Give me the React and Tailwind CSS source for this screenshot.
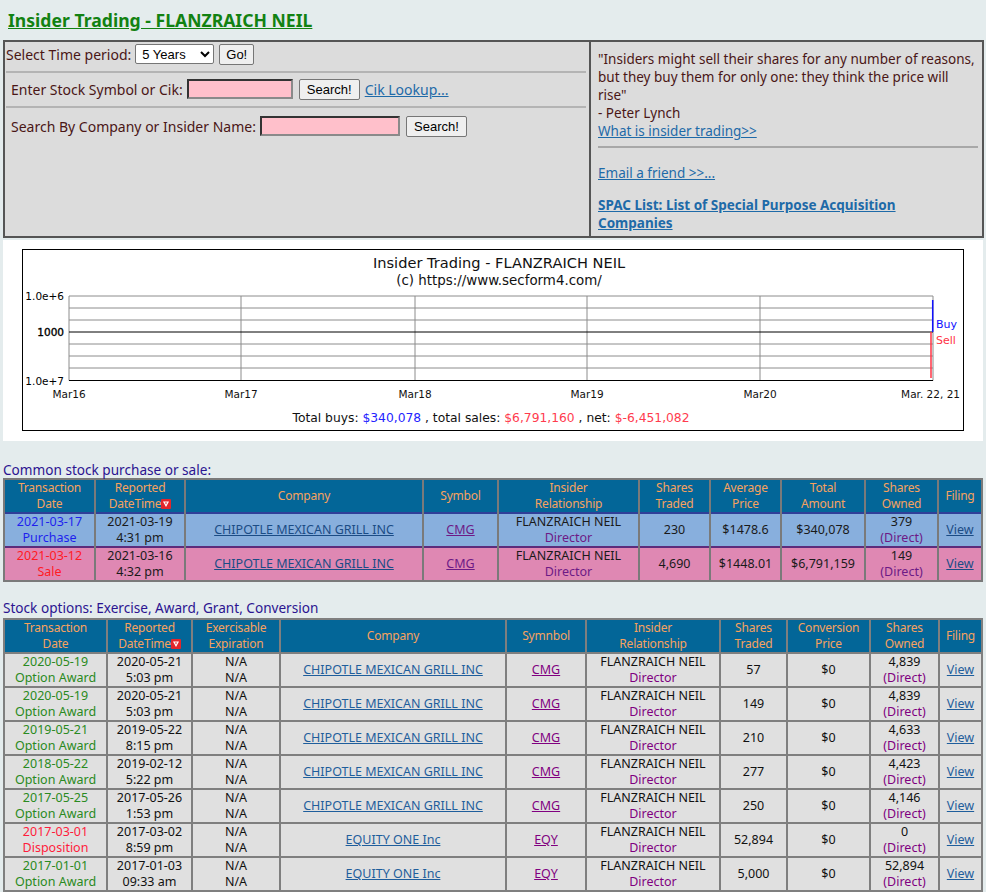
import { useState } from "react";

const trades = [
  {
    date: "2021-03-17",
    kind: "Purchase",
    reported: "2021-03-19",
    time: "4:31 pm",
    company: "CHIPOTLE MEXICAN GRILL INC",
    symbol: "CMG",
    shares: "230",
    price: "$1478.6",
    total: "$340,078",
    owned: "379",
    buy: true,
  },
  {
    date: "2021-03-12",
    kind: "Sale",
    reported: "2021-03-16",
    time: "4:32 pm",
    company: "CHIPOTLE MEXICAN GRILL INC",
    symbol: "CMG",
    shares: "4,690",
    price: "$1448.01",
    total: "$6,791,159",
    owned: "149",
    buy: false,
  },
];

const options = [
  ["2020-05-19", "Option Award", "2020-05-21", "5:03 pm", "CHIPOTLE MEXICAN GRILL INC", "CMG", "57", "4,839"],
  ["2020-05-19", "Option Award", "2020-05-21", "5:03 pm", "CHIPOTLE MEXICAN GRILL INC", "CMG", "149", "4,839"],
  ["2019-05-21", "Option Award", "2019-05-22", "8:15 pm", "CHIPOTLE MEXICAN GRILL INC", "CMG", "210", "4,633"],
  ["2018-05-22", "Option Award", "2019-02-12", "5:22 pm", "CHIPOTLE MEXICAN GRILL INC", "CMG", "277", "4,423"],
  ["2017-05-25", "Option Award", "2017-05-26", "1:53 pm", "CHIPOTLE MEXICAN GRILL INC", "CMG", "250", "4,146"],
  ["2017-03-01", "Disposition", "2017-03-02", "8:59 pm", "EQUITY ONE Inc", "EQY", "52,894", "0"],
  ["2017-01-01", "Option Award", "2017-01-03", "09:33 am", "EQUITY ONE Inc", "EQY", "5,000", "52,894"],
  ["2016-01-01", "Option Award", "2016-01-05", "10:12 am", "EQUITY ONE Inc", "EQY", "5,000", "47,894"],
];

function SortIcon() {
  return (
    <svg width="10" height="10" viewBox="0 0 10 10" className="inline-block align-[-1px]">
      <rect x="0" y="0" width="10" height="10" rx="1" fill="#e3262b" />
      <path d="M2 2.5 L8 2.5 L5 8 Z" fill="#fff" />
      <path d="M3.9 3.6 L6.1 3.6 L5 5.6 Z" fill="#e3262b" />
    </svg>
  );
}

function Chart() {
  const hLines = [46, 58, 70, 94, 106, 118];
  const vLines = [46, 218, 392, 564, 737, 910];
  const xLabels = [
    ["Mar16", 46],
    ["Mar17", 218],
    ["Mar18", 392],
    ["Mar19", 564],
    ["Mar20", 737],
  ];
  return (
    <svg width="940" height="180" viewBox="0 0 940 180" className="block font-['DejaVu_Sans',sans-serif]">
      <text x="476" y="18" fontSize="14.6" textAnchor="middle" fill="#111">
        Insider Trading - FLANZRAICH NEIL
      </text>
      <text x="476" y="35" fontSize="13.4" textAnchor="middle" fill="#111">
        (c) https://www.secform4.com/
      </text>
      {hLines.map((y) => (
        <line key={y} x1="46" x2="910" y1={y} y2={y} stroke="#8c8c8c" strokeWidth="1" />
      ))}
      {vLines.map((x) => (
        <line key={x} x1={x} x2={x} y1="46" y2="130.5" stroke="#8c8c8c" strokeWidth="1" />
      ))}
      <line x1="46" x2="910" y1="82" y2="82" stroke="#000" strokeWidth="1" />
      <line x1="46" x2="910" y1="130.5" y2="130.5" stroke="#000" strokeWidth="1" />
      <text x="41" y="49.5" fontSize="10.5" textAnchor="end" fill="#000">1.0e+6</text>
      <text x="41" y="86" fontSize="10.5" textAnchor="end" fill="#000" stroke="#000" strokeWidth="0.35">1000</text>
      <text x="41" y="134.5" fontSize="10.5" textAnchor="end" fill="#000">1.0e+7</text>
      {xLabels.map(([t, x]) => (
        <text key={t} x={x} y="148" fontSize="10.5" textAnchor="middle" fill="#111">
          {t}
        </text>
      ))}
      <text x="937" y="148" fontSize="10.5" textAnchor="end" fill="#111">Mar. 22, 21</text>
      <line x1="909.7" x2="909.7" y1="50" y2="82" stroke="#1010ff" strokeWidth="1.5" />
      <line x1="908" x2="908" y1="82" y2="128" stroke="#ff3344" strokeWidth="1.5" />
      <text x="913" y="78" fontSize="11" fill="#1010ff">Buy</text>
      <text x="913" y="94" fontSize="11" fill="#ff3344">Sell</text>
      <text x="468" y="172" fontSize="12.3" textAnchor="middle" fill="#111">
        Total buys: <tspan fill="#2222ff">$340,078</tspan> , total sales:{" "}
        <tspan fill="#ff3b4e">$6,791,160</tspan> , net: <tspan fill="#ff3b4e">$-6,451,082</tspan>
      </text>
    </svg>
  );
}

const th =
  "h-[32px] bg-[#036698] text-[#f7a25e] text-[12px] tracking-[-0.2px] font-normal text-center align-middle leading-[16px] p-0";

export default function App() {
  const [period, setPeriod] = useState("5");

  return (
    <div className="min-h-screen bg-[#e4eced] pb-6 font-['Noto_Sans',sans-serif] text-[12.5px]">
      {/* TITLE */}
      <div className="flex h-[40px] items-center pl-[8px]">
        <a href="#" className="text-[17.6px] font-bold text-[#128212] underline">
          Insider Trading - FLANZRAICH NEIL
        </a>
      </div>

      {/* SEARCH BOX */}
      <div className="ml-[3px] flex h-[198px] w-[981px] border-2 border-[#555] bg-[#dcdcdc] text-[#4a1616]">
        <div className="w-[586px] shrink-0 border-r-2 border-[#555] pt-px text-[14px]">
          <div className="flex h-[22px] items-center pl-px">
            <span>Select Time period:</span>
            <select
              value={period}
              onChange={(e) => setPeriod(e.target.value)}
              className="ml-[4px] h-[20px] w-[79px] rounded-[2px] border border-[#767676] bg-white px-[2px] font-['Liberation_Sans',sans-serif] text-[13px] text-black"
            >
              <option value="1">1 Year</option>
              <option value="5">5 Years</option>
              <option value="10">10 Years</option>
            </select>
            <button className="ml-[5px] h-[21px] w-[35px] rounded-[2px] border border-[#767676] bg-[#efefef] font-['Liberation_Sans',sans-serif] text-[13px] text-black">
              Go!
            </button>
          </div>
          <div className="ml-px mr-[3px] mt-[6px] h-[2px] bg-[#b4b4b4]" />
          <div className="mt-[5px] flex h-[22px] items-center pl-[6px]">
            <span>Enter Stock Symbol or Cik:</span>
            <input className="ml-[4px] h-[20px] w-[106px] border-2 border-b-[#8a8a8a] border-l-[#333] border-r-[#8a8a8a] border-t-[#333] bg-[#ffc0cb]" />
            <button className="ml-[6px] h-[21px] w-[61px] rounded-[2px] border border-[#767676] bg-[#efefef] font-['Liberation_Sans',sans-serif] text-[13px] text-black">
              Search!
            </button>
            <a href="#" className="ml-[5px] text-[#1e6aa8] underline">
              Cik Lookup...
            </a>
          </div>
          <div className="ml-px mr-[3px] mt-[6px] h-[2px] bg-[#b4b4b4]" />
          <div className="mt-[7px] flex h-[22px] items-center pl-[6px]">
            <span>Search By Company or Insider Name:</span>
            <input className="ml-[4px] h-[20px] w-[140px] border-2 border-b-[#8a8a8a] border-l-[#333] border-r-[#8a8a8a] border-t-[#333] bg-[#ffc0cb]" />
            <button className="ml-[6px] h-[21px] w-[61px] rounded-[2px] border border-[#767676] bg-[#efefef] font-['Liberation_Sans',sans-serif] text-[13px] text-black">
              Search!
            </button>
          </div>
        </div>

        <div className="flex-1 pl-[7px] pr-[4px] pt-[8px] text-[13.5px] leading-[18px]">
          <p className="whitespace-nowrap">"Insiders might sell their shares for any number of reasons,</p>
          <p className="whitespace-nowrap">but they buy them for only one: they think the price will</p>
          <p>rise"</p>
          <p>- Peter Lynch</p>
          <a href="#" className="text-[#1e6aa8] underline">
            What is insider trading&gt;&gt;
          </a>
          <div className="mt-[6px] h-[2px] bg-[#a8a8a8]" />
          <a href="#" className="mt-[16px] block text-[#1e6aa8] underline">
            Email a friend &gt;&gt;...
          </a>
          <a href="#" className="mt-[14px] block font-bold text-[#1e6aa8] underline">
            SPAC List: List of Special Purpose Acquisition
            <br />
            Companies
          </a>
        </div>
      </div>

      {/* CHART */}
      <div className="ml-[3px] mt-[2px] h-[201px] w-[980px] bg-white pl-[19px] pt-[9px]">
        <div className="w-[942px] border border-black">
          <Chart />
        </div>
      </div>

      {/* COMMON STOCK */}
      <p className="pl-[3px] pt-[21px] text-[13.6px] leading-[16px] text-[#2b1491]">Common stock purchase or sale:</p>
      <table className="ml-[3px] w-[980px] table-fixed border-separate border-spacing-[2px] bg-[#7a7a7a] leading-[16px]">
        <colgroup>
          <col className="w-[89px]" />
          <col className="w-[88px]" />
          <col className="w-[236px]" />
          <col className="w-[73px]" />
          <col className="w-[139px]" />
          <col className="w-[69px]" />
          <col className="w-[69px]" />
          <col className="w-[82px]" />
          <col className="w-[71px]" />
          <col />
        </colgroup>
        <thead>
          <tr>
            <th className={th}>Transaction<br />Date</th>
            <th className={th}>Reported<br />DateTime<SortIcon /></th>
            <th className={th}>Company</th>
            <th className={th}>Symbol</th>
            <th className={th}>Insider<br />Relationship</th>
            <th className={th}>Shares<br />Traded</th>
            <th className={th}>Average<br />Price</th>
            <th className={th}>Total<br />Amount</th>
            <th className={th}>Shares<br />Owned</th>
            <th className={th}>Filing</th>
          </tr>
        </thead>
        <tbody>
          {trades.map((t) => {
            const cell = t.buy
              ? "h-[32px] bg-[#88afdd] p-0 text-center align-middle text-[#1a1a1a] shadow-[0_-2px_0_#2f3f98]"
              : "h-[32px] bg-[#df88b3] p-0 text-center align-middle text-[#1a1a1a] shadow-[0_-2px_0_#5d2c7c]";
            return (
              <tr key={t.date}>
                <td className={cell}>
                  <span className={t.buy ? "text-[#1f1fee]" : "text-[#ff1a24]"}>
                    {t.date}
                    <br />
                    {t.kind}
                  </span>
                </td>
                <td className={cell}>
                  {t.reported}
                  <br />
                  {t.time}
                </td>
                <td className={cell}>
                  <a href="#" className="text-[#1b4c85] underline">{t.company}</a>
                </td>
                <td className={cell}>
                  <a href="#" className="text-[#6d1a86] underline">{t.symbol}</a>
                </td>
                <td className={cell}>
                  FLANZRAICH NEIL
                  <br />
                  <span className="text-[#6d1a86]">Director</span>
                </td>
                <td className={cell}>{t.shares}</td>
                <td className={cell}>{t.price}</td>
                <td className={cell}>{t.total}</td>
                <td className={cell}>
                  {t.owned}
                  <br />
                  <span className="text-[#6d1a86]">(Direct)</span>
                </td>
                <td className={cell}>
                  <a href="#" className="text-[#1b4c85] underline">View</a>
                </td>
              </tr>
            );
          })}
        </tbody>
      </table>

      {/* STOCK OPTIONS */}
      <p className="pl-[3px] pt-[18px] text-[13.6px] leading-[16px] text-[#2b1491]">
        Stock options: Exercise, Award, Grant, Conversion
      </p>
      <table className="ml-[3px] mt-[2px] w-[980px] table-fixed border-separate border-spacing-[2px] bg-[#7f7f7f] leading-[16px]">
        <colgroup>
          <col className="w-[101px]" />
          <col className="w-[83px]" />
          <col className="w-[86px]" />
          <col className="w-[224px]" />
          <col className="w-[78px]" />
          <col className="w-[132px]" />
          <col className="w-[65px]" />
          <col className="w-[81px]" />
          <col className="w-[67px]" />
          <col />
        </colgroup>
        <thead>
          <tr>
            <th className={th}>Transaction<br />Date</th>
            <th className={th}>Reported<br />DateTime<SortIcon /></th>
            <th className={th}>Exercisable<br />Expiration</th>
            <th className={th}>Company</th>
            <th className={th}>Symnbol</th>
            <th className={th}>Insider<br />Relationship</th>
            <th className={th}>Shares<br />Traded</th>
            <th className={th}>Conversion<br />Price</th>
            <th className={th}>Shares<br />Owned</th>
            <th className={th}>Filing</th>
          </tr>
        </thead>
        <tbody>
          {options.map((r, i) => {
            const td = "h-[32px] bg-[#e0e0e0] p-0 text-center align-middle text-[#111]";
            const sold = r[1] === "Disposition";
            return (
              <tr key={i}>
                <td className={td}>
                  <span className={sold ? "text-[#ff1c3c]" : "text-[#2a8a22]"}>
                    {r[0]}
                    <br />
                    {r[1]}
                  </span>
                </td>
                <td className={td}>
                  {r[2]}
                  <br />
                  {r[3]}
                </td>
                <td className={td}>
                  N/A
                  <br />
                  N/A
                </td>
                <td className={td}>
                  <a href="#" className="text-[#1f5e9c] underline">{r[4]}</a>
                </td>
                <td className={td}>
                  <a href="#" className="text-[#800080] underline">{r[5]}</a>
                </td>
                <td className={td}>
                  FLANZRAICH NEIL
                  <br />
                  <span className="text-[#800080]">Director</span>
                </td>
                <td className={td}>{r[6]}</td>
                <td className={td}>$0</td>
                <td className={td}>
                  {r[7]}
                  <br />
                  <span className="text-[#800080]">(Direct)</span>
                </td>
                <td className={td}>
                  <a href="#" className="text-[#1f5e9c] underline">View</a>
                </td>
              </tr>
            );
          })}
        </tbody>
      </table>
    </div>
  );
}
